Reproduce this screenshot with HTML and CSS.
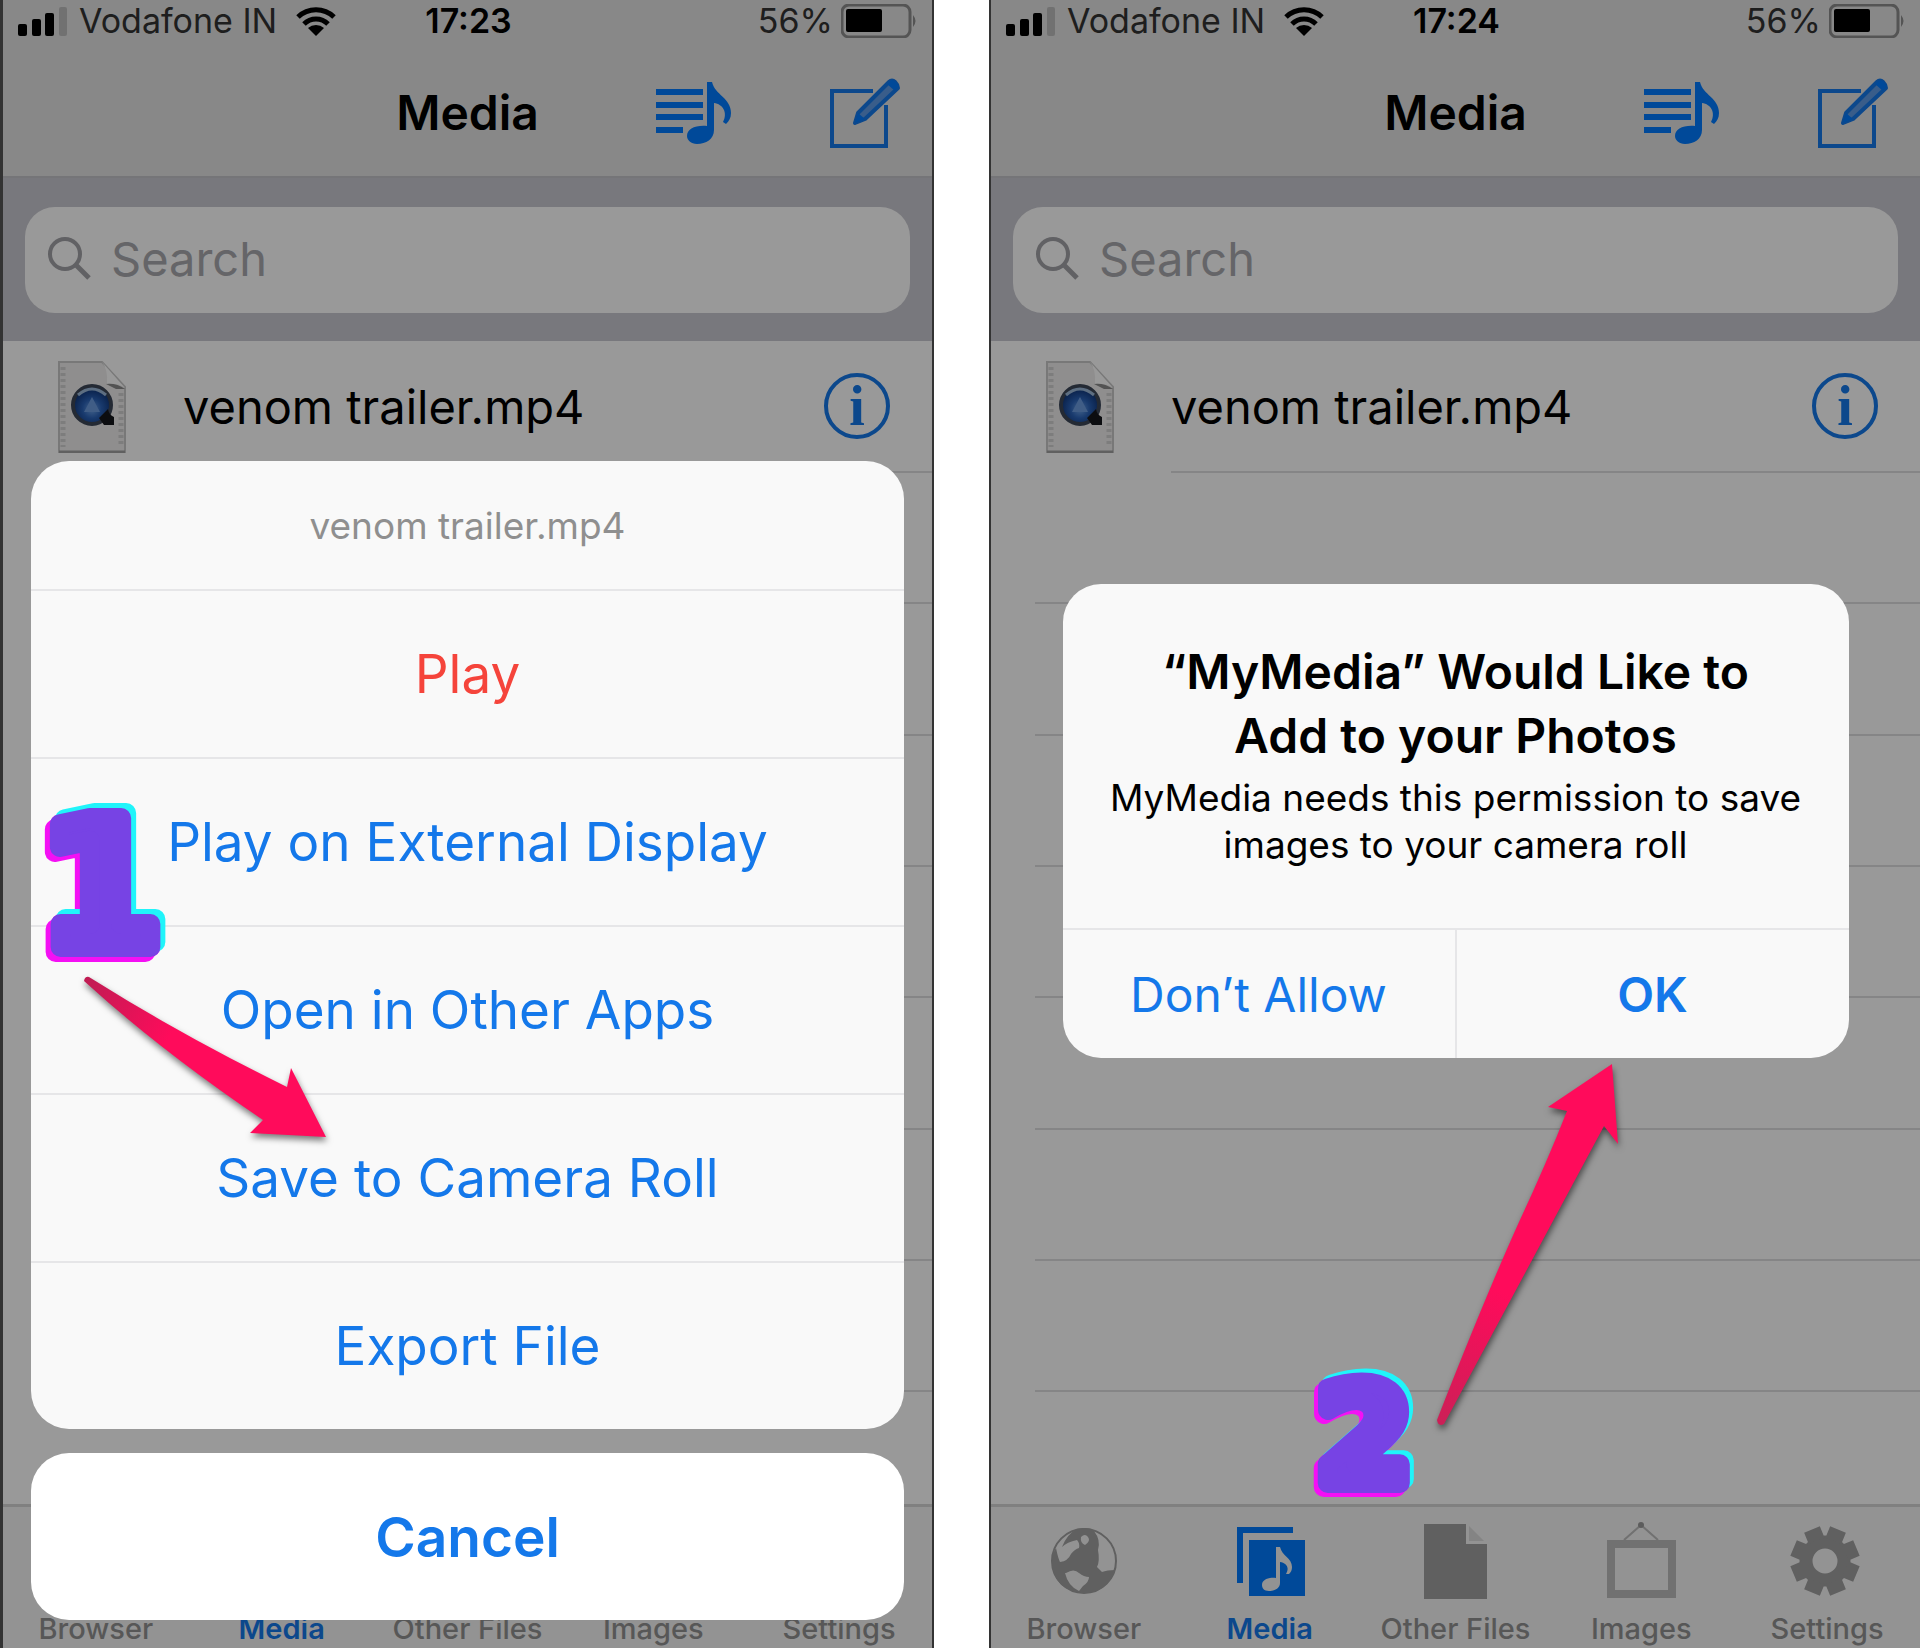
FILE: index.html
```html
<!DOCTYPE html>
<html lang="en">

<head>
     <meta charset="UTF-8">
     <meta name="viewport" content="width=device-width, initial-scale=1.0">
     <title>Save to Camera Roll</title>
     <link rel="stylesheet" href="styles.css">
</head>

<body>
     <!-- Shared icons -->
     <svg class="icon-defs" aria-hidden="true">
          <defs>
               <linearGradient id="arrowOne" gradientUnits="userSpaceOnUse" x1="5" y1="5" x2="90" y2="60">
                    <stop offset="0" stop-color="#c01c53" />
                    <stop offset="1" stop-color="#ff0b5b" />
               </linearGradient>
               <linearGradient id="arrowTwo" gradientUnits="userSpaceOnUse" x1="8" y1="362" x2="70" y2="230">
                    <stop offset="0" stop-color="#cc1f57" />
                    <stop offset="1" stop-color="#ff0b5b" />
               </linearGradient>
               <radialGradient id="lens" cx="0.5" cy="0.6" r="0.5">
                    <stop offset="0" stop-color="#6fa4e8" />
                    <stop offset="0.5" stop-color="#2a62b8" />
                    <stop offset="1" stop-color="#123a80" />
               </radialGradient>
          </defs>
          <symbol id="icon-signal" viewBox="0 0 50 30">
               <rect x="0" y="18" width="9" height="12" rx="2" />
               <rect x="14" y="13" width="9" height="17" rx="2" />
               <rect x="27" y="7" width="9" height="23" rx="2" />
               <rect x="41" y="1" width="8" height="29" rx="2" fill="#bdbdbd" />
          </symbol>
          <symbol id="icon-wifi" viewBox="0 0 40 30">
               <path d="M2 11a26 26 0 0 1 36 0M8 18a17 17 0 0 1 24 0" fill="none" stroke="#000" stroke-width="5" />
               <path d="M12 22a12 12 0 0 1 16 0l-8 8z" />
          </symbol>
          <symbol id="icon-battery" viewBox="0 0 78 34">
               <rect x="1" y="1" width="68" height="32" rx="7" fill="none" stroke="#8d8d8d" stroke-width="3" />
               <rect x="5" y="5" width="36" height="23" rx="2" />
               <path d="M72 11q5 6 0 12z" fill="#8d8d8d" />
          </symbol>
          <symbol id="icon-playlist" viewBox="0 0 78 64">
               <path d="M0 11h47M0 24h47M0 36h47M0 49h27" fill="none" stroke="#007aff" stroke-width="6" />
               <path d="M51 1h5c3 13 19 16 19 31 0 5-2 8-5 11l-3-2c5-9 0-18-9-19v27c0 9-8 14-17 14-6 0-10-4-10-8 0-7 8-11 20-10z" fill="#007aff" />
          </symbol>
          <symbol id="icon-compose" viewBox="0 0 70 70">
               <path d="M43 13H2v55h54V27" fill="none" stroke="#1478ea" stroke-width="4" />
               <path d="M25 45l3-10L59 4q3-3 6 0t3 6L35 41z" fill="#5f9be6" stroke="#1478ea" stroke-width="4" stroke-linejoin="round" />
               <path d="M25 45l3-10 7 6zM57 6l4-4q4-1 8 6l-4 5z" fill="#007aff" />
          </symbol>
          <symbol id="icon-search" viewBox="0 0 44 44">
               <circle cx="18" cy="18" r="15" fill="none" stroke="#a2a2a7" stroke-width="4" />
               <path d="M29 29l13 13" stroke="#a2a2a7" stroke-width="5" />
          </symbol>
          <symbol id="icon-movie" viewBox="0 0 68 92">
               <path d="M1 1h43l23 25v65H1z" fill="#eeeded" stroke="#c9c9c9" stroke-width="2" />
               <path d="M44 1q6 7 5 22 11-1 18 4z" fill="#fff" />
               <path d="M48 23q11-1 19 5l-9 0z" fill="#8b8b8b" />
               <path d="M5 6v80M63 32v54" fill="none" stroke="#d0d0d0" stroke-width="5" stroke-dasharray="3 3" />
               <path d="M1 91h66" stroke="#a0a0a0" stroke-width="3" />
               <circle cx="34" cy="44" r="19" fill="url(#lens)" stroke="#3c4658" stroke-width="4" />
               <path d="M20 34q14-12 28 0" fill="none" stroke="#9bb8d8" stroke-width="3" />
               <path d="M34 36l8 15H26z" fill="#6b9be0" />
               <path d="M41 57l9-9q1 6 6 8v8H46z" fill="#15171c" />
          </symbol>
          <symbol id="icon-globe" viewBox="0 0 76 80">
               <circle cx="38" cy="40" r="32" fill="none" stroke="#a0a0a0" stroke-width="2" />
               <path d="M31 8q12-3 17 2 7 9 4 19 2 11-1 17l5 5q5-2 13-2Q61 72 38 72 8 70 6 42q0-9 4-15 2 10 4 14 8-1 11-8 4-5 8-6 1-5-2-8-10 2-15 7 5-13 15-18z" fill="#a0a0a0" />
               <path d="M20 52q8-5 13 0 5 4 10 4 0 5-6 9l-4 5q-11-5-14-18z" fill="#f2f2f2" />
               <path d="M35 16q4-4 7 0t-3 8q-5-2-4-8z" fill="#f2f2f2" />
          </symbol>
          <symbol id="icon-media" viewBox="0 0 76 80">
               <path d="M61 9H8v53" fill="none" stroke="#007aff" stroke-width="6" />
               <rect x="17" y="19" width="56" height="56" fill="#007aff" />
               <path d="M44 26h4c2 9 12 11 12 20 0 3-1 5-3 7h-3c4-7 0-11-6-12v21c0 5-5 8-11 8-5 0-7-3-7-6 0-5 6-8 14-7z" fill="#f5f5f5" />
          </symbol>
          <symbol id="icon-file" viewBox="0 0 76 80">
               <path d="M7 3h42v20h21v55H7z" fill="#a0a0a0" />
               <path d="M52 5l15 15H52z" fill="#dcdcdc" />
          </symbol>
          <symbol id="icon-frame" viewBox="0 0 76 80">
               <path d="M8 23h61v50H8z" fill="none" stroke="#bcbcbc" stroke-width="8" />
               <path d="M21 19L38 4l17 15" fill="none" stroke="#bcbcbc" stroke-width="2" />
               <circle cx="38" cy="4" r="3" fill="#9a9a9a" />
          </symbol>
          <symbol id="icon-gear" viewBox="0 0 76 80">
               <circle cx="36" cy="40" r="19" fill="none" stroke="#a0a0a0" stroke-width="13" />
               <g fill="none" stroke="#a0a0a0" stroke-width="17">
                    <path d="M36 6v12M36 62v12M2 40h12M58 40h12" transform="rotate(22.5 36 40)" />
                    <path d="M36 6v12M36 62v12M2 40h12M58 40h12" transform="rotate(67.5 36 40)" />
               </g>
          </symbol>
     </svg>

     <main class="steps">
          <section class="phone">
               <div class="status-bar">
                    <div class="carrier">
                         <svg class="signal"><use href="#icon-signal" /></svg>
                         <span>Vodafone IN</span>
                         <svg class="wifi"><use href="#icon-wifi" /></svg>
                    </div>
                    <strong class="time">17:23</strong>
                    <div class="power">
                         <span>56%</span>
                         <svg class="battery"><use href="#icon-battery" /></svg>
                    </div>
               </div>
               <header class="nav-bar">
                    <h1>Media</h1>
                    <div class="nav-actions">
                         <button aria-label="Playlist"><svg class="playlist"><use href="#icon-playlist" /></svg></button>
                         <button aria-label="Edit"><svg class="compose"><use href="#icon-compose" /></svg></button>
                    </div>
               </header>
               <div class="search-bar">
                    <label class="search-field">
                         <svg><use href="#icon-search" /></svg>
                         <input type="search" placeholder="Search" aria-label="Search">
                    </label>
               </div>
               <ul class="file-list">
                    <li class="file">
                         <svg class="movie"><use href="#icon-movie" /></svg>
                         <div class="file-body">
                              <span>venom trailer.mp4</span>
                              <button class="info" aria-label="Info">i</button>
                         </div>
                    </li>
                    <li></li>
                    <li></li>
                    <li></li>
                    <li></li>
                    <li></li>
                    <li></li>
                    <li></li>
               </ul>
               <nav class="tab-bar">
                    <a href="#"><svg><use href="#icon-globe" /></svg>Browser</a>
                    <a href="#" class="active"><svg><use href="#icon-media" /></svg>Media</a>
                    <a href="#"><svg><use href="#icon-file" /></svg>Other Files</a>
                    <a href="#"><svg><use href="#icon-frame" /></svg>Images</a>
                    <a href="#"><svg><use href="#icon-gear" /></svg>Settings</a>
               </nav>

               <div class="overlay overlay-sheet">
                    <div class="sheet">
                         <p>venom trailer.mp4</p>
                         <button class="danger">Play</button>
                         <button>Play on External Display</button>
                         <button>Open in Other Apps</button>
                         <button>Save to Camera Roll</button>
                         <button>Export File</button>
                    </div>
                    <button class="cancel">Cancel</button>
               </div>

               <svg class="step-number step-one" viewBox="0 0 150 180">
                    <text x="7" y="157">1</text>
               </svg>
               <svg class="arrow arrow-one" viewBox="0 0 250 170">
                    <path d="M3 6q1-5 5-4Q100 60 206 112l4-19 35 69-76-4 13-13Q80 76 3 6z" fill="url(#arrowOne)" />
               </svg>
          </section>

          <section class="phone">
               <div class="status-bar">
                    <div class="carrier">
                         <svg class="signal"><use href="#icon-signal" /></svg>
                         <span>Vodafone IN</span>
                         <svg class="wifi"><use href="#icon-wifi" /></svg>
                    </div>
                    <strong class="time">17:24</strong>
                    <div class="power">
                         <span>56%</span>
                         <svg class="battery"><use href="#icon-battery" /></svg>
                    </div>
               </div>
               <header class="nav-bar">
                    <h1>Media</h1>
                    <div class="nav-actions">
                         <button aria-label="Playlist"><svg class="playlist"><use href="#icon-playlist" /></svg></button>
                         <button aria-label="Edit"><svg class="compose"><use href="#icon-compose" /></svg></button>
                    </div>
               </header>
               <div class="search-bar">
                    <label class="search-field">
                         <svg><use href="#icon-search" /></svg>
                         <input type="search" placeholder="Search" aria-label="Search">
                    </label>
               </div>
               <ul class="file-list">
                    <li class="file">
                         <svg class="movie"><use href="#icon-movie" /></svg>
                         <div class="file-body">
                              <span>venom trailer.mp4</span>
                              <button class="info" aria-label="Info">i</button>
                         </div>
                    </li>
                    <li></li>
                    <li></li>
                    <li></li>
                    <li></li>
                    <li></li>
                    <li></li>
                    <li></li>
               </ul>
               <nav class="tab-bar">
                    <a href="#"><svg><use href="#icon-globe" /></svg>Browser</a>
                    <a href="#" class="active"><svg><use href="#icon-media" /></svg>Media</a>
                    <a href="#"><svg><use href="#icon-file" /></svg>Other Files</a>
                    <a href="#"><svg><use href="#icon-frame" /></svg>Images</a>
                    <a href="#"><svg><use href="#icon-gear" /></svg>Settings</a>
               </nav>

               <div class="overlay overlay-alert">
                    <div class="alert" role="alertdialog" aria-labelledby="alertTitle">
                         <div class="alert-text">
                              <h2 id="alertTitle">“MyMedia” Would Like to<br>Add to your Photos</h2>
                              <p>MyMedia needs this permission to save<br>images to your camera roll</p>
                         </div>
                         <div class="alert-buttons">
                              <button>Don’t Allow</button>
                              <button class="primary">OK</button>
                         </div>
                    </div>
               </div>

               <svg class="step-number step-two" viewBox="0 0 150 180">
                    <text x="17" y="123">2</text>
               </svg>
               <svg class="arrow arrow-two" viewBox="0 0 200 370">
                    <path d="M4 358Q50 240 86 160 114 100 134 49l-19-4 64-43 6 80-14-18L11 362q-6 3-7-4z" fill="url(#arrowTwo)" />
               </svg>
          </section>
     </main>
</body>

</html>
```

FILE: styles.css
```css
* {
     box-sizing: border-box;
}

body {
     margin: 0;
     background-color: #fff;
     font-family: Inter, "Liberation Sans", sans-serif;
     color: #000;
}

button {
     margin: 0;
     padding: 0;
     border: none;
     background: none;
     font-family: inherit;
     cursor: pointer;
}

svg {
     display: block;
     flex: none;
}

.icon-defs {
     position: absolute;
     width: 0;
     height: 0;
}

.steps {
     display: grid;
     grid-template-columns: 934fr 931fr;
     gap: 55px;
     min-height: 100vh;
}

.phone {
     position: relative;
     display: flex;
     flex-direction: column;
     overflow: hidden;
     border-left: 2px solid #333;
     background-color: #fff;
}

.phone:first-child {
     border-left-width: 3px;
     border-right: 2px solid #333;
}

/* Status bar */
.status-bar {
     display: grid;
     grid-template-columns: 1fr auto 1fr;
     align-items: center;
     height: 41px;
     padding: 0 13px 0 15px;
     background-color: #e3e3e3;
     font-size: 34px;
}

.carrier,
.power {
     display: flex;
     align-items: center;
     color: #333;
}

.power {
     justify-content: flex-end;
     gap: 8px;
}

.carrier {
     gap: 11px;
}

.time {
     font-weight: 600;
}

.signal {
     width: 50px;
     height: 30px;
}

.wifi {
     width: 40px;
     height: 30px;
     margin-left: 8px;
}

.battery {
     width: 78px;
     height: 34px;
}

/* Navigation bar */
.nav-bar {
     display: grid;
     grid-template-columns: 1fr auto 1fr;
     align-items: center;
     height: 137px;
     padding: 8px 32px 0;
     border-bottom: 2px solid #c3c3c8;
     background-color: #e3e3e3;
}

.nav-bar h1 {
     grid-column: 2;
     margin: 0;
     font-size: 48px;
     font-weight: 600;
}

.nav-actions {
     display: flex;
     justify-content: flex-end;
     align-items: center;
     gap: 96px;
}

.playlist {
     width: 78px;
     height: 64px;
}

.compose {
     width: 70px;
     height: 70px;
}

/* Search */
.search-bar {
     padding: 29px 22px 28px;
     background-color: #c9c9d0;
}

.search-field {
     display: flex;
     align-items: center;
     gap: 20px;
     height: 106px;
     padding: 0 22px 4px;
     border-radius: 30px;
     background-color: #fff;
}

.search-field svg {
     width: 44px;
     height: 44px;
}

.search-field input {
     flex: 1;
     min-width: 0;
     padding: 0;
     border: none;
     outline: none;
     background: none;
     font-family: inherit;
     font-size: 47px;
}

.search-field input::placeholder {
     color: #a8a8ad;
     opacity: 1;
}

/* File list */
.file-list {
     flex: 1;
     margin: 0;
     padding: 0;
     list-style: none;
}

.file-list li {
     height: 131px;
     margin-left: 44px;
     border-bottom: 2px solid #dedee0;
}

.file-list li:nth-child(3n) {
     height: 132px;
}

.file-list .file {
     display: flex;
     align-items: center;
     height: 132px;
     margin-left: 55px;
     border-bottom: none;
}

.movie {
     width: 68px;
     height: 92px;
     margin-right: 57px;
}

.file-body {
     display: flex;
     flex: 1;
     justify-content: space-between;
     align-items: center;
     height: 132px;
     padding-right: 42px;
     border-bottom: 2px solid #dedee0;
     font-size: 47px;
}

.info {
     width: 66px;
     height: 66px;
     border: 4px solid #1478ea;
     border-radius: 50%;
     color: #1478ea;
     font-family: "Liberation Serif", serif;
     font-size: 56px;
     font-weight: bold;
     line-height: 56px;
}

/* Tab bar */
.tab-bar {
     display: flex;
     height: 144px;
     padding-top: 14px;
     border-top: 3px solid #d6d6d6;
     background-color: #f5f5f5;
}

.tab-bar a {
     display: flex;
     flex: 1;
     flex-direction: column;
     align-items: center;
     gap: 11px;
     color: #929292;
     font-size: 29px;
     font-weight: 500;
     line-height: 34px;
     text-decoration: none;
     white-space: nowrap;
}

.tab-bar a.active {
     color: #1478ea;
     font-weight: 600;
}

.tab-bar svg {
     width: 76px;
     height: 80px;
}

/* Dimmed layer over the app */
.overlay {
     position: absolute;
     inset: 0;
     display: flex;
     flex-direction: column;
     background-color: rgba(0, 0, 0, 0.4);
}

.overlay-sheet {
     justify-content: flex-end;
     gap: 24px;
     padding: 28px;
}

.sheet {
     overflow: hidden;
     border-radius: 38px;
     background-color: #f9f9f9;
}

.sheet p {
     margin: 0;
     padding-top: 2px;
     color: #8f8f8f;
     font-size: 37px;
     line-height: 126px;
     text-align: center;
}

.sheet button,
.cancel {
     display: block;
     width: 100%;
     height: 168px;
     color: #1478ea;
     font-size: 53px;
}

.sheet button {
     border-top: 2px solid #e6e6e8;
}

.sheet .danger {
     color: #f5443b;
}

.cancel {
     height: 167px;
     border-radius: 38px;
     background-color: #fff;
     font-size: 55px;
     font-weight: 600;
}

.overlay-alert {
     justify-content: center;
     align-items: center;
     padding-bottom: 6px;
}

.alert {
     width: 786px;
     overflow: hidden;
     border-radius: 38px;
     background-color: #f9f9f9;
     text-align: center;
}

.alert-text {
     padding: 56px 0 60px;
}

.alert h2 {
     margin: 0;
     font-size: 48px;
     font-weight: 600;
     line-height: 64px;
}

.alert p {
     margin: 6px 0 0;
     font-size: 37px;
     line-height: 47px;
}

.alert-buttons {
     display: flex;
     border-top: 2px solid #e6e6e8;
}

.alert-buttons button {
     flex: 1;
     height: 128px;
     color: #1478ea;
     font-size: 48px;
}

.alert-buttons .primary {
     border-left: 2px solid #e6e6e8;
     font-weight: 600;
}

/* Step markers */
.step-number {
     position: absolute;
     width: 150px;
     height: 180px;
     overflow: visible;
     fill: #7743e4;
     stroke: #7743e4;
     stroke-width: 20px;
     stroke-linejoin: round;
     font-family: "DejaVu Sans", sans-serif;
     font-weight: bold;
}

.step-one {
     top: 790px;
     left: 30px;
     font-size: 176px;
     filter: drop-shadow(5px -5px 0 #20f4fa) drop-shadow(-5px 5px 0 #f410f4);
}

.step-two {
     top: 1360px;
     left: 309px;
     font-size: 136px;
     filter: drop-shadow(4px -4px 0 #20f4fa) drop-shadow(-4px 4px 0 #f410f4);
}

.arrow {
     position: absolute;
     filter: drop-shadow(1px 4px 3px rgba(0, 0, 0, 0.5));
}

.arrow-one {
     top: 975px;
     left: 78px;
     width: 250px;
     height: 170px;
}

.arrow-two {
     top: 1062px;
     left: 442px;
     width: 200px;
     height: 370px;
}
```
